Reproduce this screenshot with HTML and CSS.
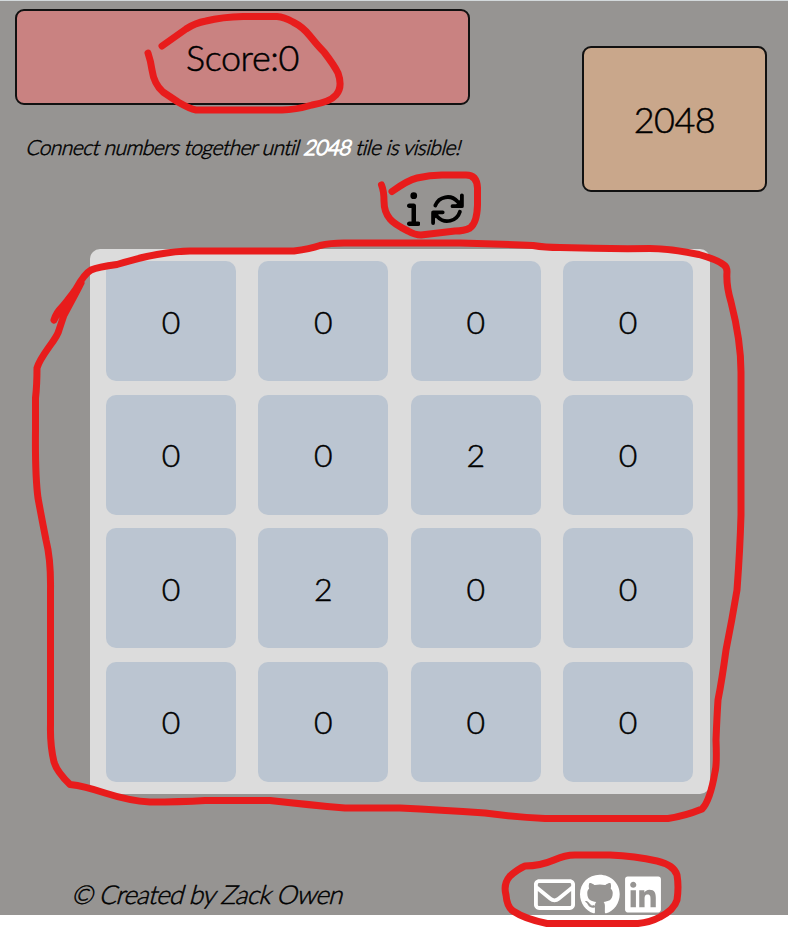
FILE: index.html
```html
<!DOCTYPE html>
<html lang="en">
<head>
<meta charset="utf-8">
<title>2048</title>
<link rel="stylesheet" href="styles.css">
</head>
<body>
<div class="app">
  <header class="header">
    <div class="intro">
      <div class="score">Score:0</div>
      <p class="hint">Connect numbers together until <strong>2048</strong> tile is visible!</p>
    </div>
    <div class="goal">2048</div>
  </header>
  <nav class="controls">
    <svg class="icon-info" viewBox="0 0 192 512"><path d="M48 80a48 48 0 1 1 96 0A48 48 0 1 1 48 80zM0 224c0-17.7 14.3-32 32-32H96c17.7 0 32 14.3 32 32V448h32c17.7 0 32 14.3 32 32s-14.3 32-32 32H32c-17.7 0-32-14.3-32-32s14.3-32 32-32H64V256H32c-17.7 0-32-14.3-32-32z"/></svg>
    <svg class="icon-restart" viewBox="0 0 36 36"><path d="M5.300 14.500A13.200 13.200 0 0 1 27.500 10.500L31.700 15M31.900 4.300V15.200H22.500M29.900 20.800A13.200 13.200 0 0 1 7.700 26L3.200 21.500M3.100 32V21.300H12.700"/><path class="head" d="M31.500 7V15.200H25L28 11ZM3.500 29V21.300H10L7 25.500Z"/></svg>
  </nav>
  <main class="board">
    <div class="tile">0</div><div class="tile">0</div><div class="tile">0</div><div class="tile">0</div>
    <div class="tile">0</div><div class="tile">0</div><div class="tile">2</div><div class="tile">0</div>
    <div class="tile">0</div><div class="tile">2</div><div class="tile">0</div><div class="tile">0</div>
    <div class="tile">0</div><div class="tile">0</div><div class="tile">0</div><div class="tile">0</div>
  </main>
  <footer class="footer">
    <span class="credit">© Created by Zack Owen</span>
    <div class="social">
      <svg class="icon-mail" viewBox="0 0 512 512"><path d="M64 112c-8.8 0-16 7.2-16 16v22.1L220.5 291.7c20.7 17 50.4 17 71.1 0L464 150.1V128c0-8.800-7.200-16-16-16H64zM48 212.200V384c0 8.800 7.200 16 16 16H448c8.800 0 16-7.200 16-16V212.200L322 328.800c-38.400 31.500-93.700 31.500-132 0L48 212.200zM0 128C0 92.700 28.700 64 64 64H448c35.300 0 64 28.700 64 64V384c0 35.300-28.700 64-64 64H64c-35.300 0-64-28.700-64-64V128z"/></svg>
      <svg class="icon-github" viewBox="0 0 496 512"><path d="M165.9 397.4c0 2-2.3 3.6-5.2 3.6-3.3.3-5.6-1.3-5.6-3.6 0-2 2.3-3.6 5.2-3.6 3-.3 5.6 1.3 5.6 3.6zm-31.1-4.5c-.7 2 1.3 4.3 4.3 4.9 2.6 1 5.6 0 6.2-2s-1.3-4.3-4.3-5.2c-2.6-.7-5.5.3-6.2 2.3zm44.2-1.7c-2.9.7-4.9 2.6-4.6 4.9.3 2 2.9 3.3 5.9 2.6 2.9-.7 4.9-2.6 4.6-4.6-.3-1.9-3-3.2-5.9-2.9zM244.8 8C106.1 8 0 113.3 0 252c0 110.9 69.8 205.8 169.5 239.2 12.8 2.3 17.3-5.6 17.3-12.1 0-6.2-.3-40.4-.3-61.4 0 0-70 15-84.7-29.8 0 0-11.4-29.1-27.8-36.6 0 0-22.9-15.7 1.6-15.4 0 0 24.9 2 38.6 25.8 21.9 38.6 58.6 27.5 72.9 20.9 2.3-16 8.8-27.1 16-33.7-55.9-6.2-112.3-14.3-112.3-110.5 0-27.5 7.6-41.3 23.6-58.9-2.6-6.5-11.1-33.3 2.6-67.9 20.9-6.5 69 27 69 27 20-5.6 41.5-8.5 62.8-8.5s42.8 2.9 62.8 8.5c0 0 48.1-33.6 69-27 13.7 34.7 5.2 61.4 2.6 67.9 16 17.7 25.8 31.5 25.8 58.9 0 96.5-58.9 104.2-114.8 110.5 9.2 7.9 17 22.9 17 46.4 0 33.7-.3 75.4-.3 83.6 0 6.5 4.6 14.4 17.3 12.1C428.2 457.8 496 362.9 496 252 496 113.3 383.5 8 244.8 8z"/></svg>
      <svg class="icon-linkedin" viewBox="0 0 448 512"><path d="M416 32H31.9C14.3 32 0 46.5 0 64.3v383.4C0 465.5 14.3 480 31.9 480H416c17.6 0 32-14.5 32-32.3V64.3c0-17.8-14.4-32.3-32-32.3zM135.4 416H69V202.2h66.5V416zm-33.2-243c-21.3 0-38.5-17.3-38.5-38.5S80.9 96 102.2 96c21.2 0 38.5 17.3 38.5 38.5 0 21.3-17.2 38.5-38.5 38.5zm282.1 243h-66.4V312c0-24.8-.5-56.7-34.5-56.7-34.6 0-39.9 27-39.9 54.9V416h-66.4V202.2h63.7v29.2h.9c8.9-16.8 30.6-34.5 62.2-34.5 66.5 0 79.9 43.8 79.9 100.9V416z"/></svg>
    </div>
  </footer>
</div>
<svg class="markup" viewBox="0 0 788 928">
  <path d="M162 46L186 29Q195 23 206 21Q222 17 243 16.500H277Q284 17 293 22Q303 27 310 36Q318 46 324 52Q334 65 338 73Q343 87 336 95Q330 102 312 105Q295 110 282 110H196Q190 109 178 102L163 92Q154 84 152 70Q151 62 148 53"/>
  <path d="M392 191.500Q408 180 417 178Q430 175 442 175H466Q477 175 477.500 188V205Q477 223 470 228Q464 231 455 231L421 235Q415 235 408 231Q394 224 390 219Q384 212 384 201Q384 191 381.500 185"/>
  <path d="M54 320Q56 313 62 307Q70 298 76 289Q84 274 91 270Q98 267 117 264.500Q142 257 157 254.500Q177 251 190 251H294Q310 249 320 245.500Q330 243 344 243H460Q500 244 533 245.500Q545 247.500 560 247.500Q605 249 650 248.500Q670 248.500 699 254.500Q718 260 724 265Q727 267 727 272Q726 285 731 302Q741 341 741 372V515Q740 550 737 590Q732 620 726 650Q722 680 718 700Q717 715 716 740Q717 765 715 772Q710 801 702 809Q685 816 668 818.500H545Q515 817 485 813Q440 810 400 808H345Q310 805 270 800.500H205Q180 802 150 802Q130 801 105 793Q84 786 70 784.500Q57 772 54 762Q50 745 50.500 725V590Q51 560 46 540Q42 520 38 498Q35 475 35.500 430V398Q37 385 37 368Q39 361 49 347Q58 335 59 330L64 315Q75 295 81 283L67 301Q58 312 54 320"/>
  <path d="M506 895Q503 884 510 876Q518 869 525 866Q540 866 554 860Q565 855 575 855H610Q635 856 657 861Q674 865 677 875Q679 887 677 900Q674 910 660 917Q650 922.500 638 923.500H547Q525 919 513 911Q507 907 506 895"/>
</svg>
</body>
</html>
```

FILE: styles.css
```css
* {
  box-sizing: border-box;
}

body {
  margin: 0;
  background: #fff;
  color: #000;
  font-family: Lato, sans-serif;
  font-weight: 300;
}

.app {
  height: 915px;
  display: flex;
  flex-direction: column;
  border-top: 1px solid #d3d9dc;
  background: #969492;
  -webkit-text-stroke: 0.5px currentColor;
}

.header {
  height: 191px;
  padding: 8px 21px 0 15px;
  display: flex;
  justify-content: space-between;
}

.intro {
  width: 455px;
}

.score {
  height: 96px;
  display: flex;
  align-items: center;
  justify-content: center;
  border: 2px solid #111;
  border-radius: 9px;
  background: #c98281;
  font-size: 36px;
  letter-spacing: -0.4px;
}

.hint {
  width: max-content;
  margin: 29px 0 0 9.500px;
  font-size: 21px;
  line-height: 26px;
  letter-spacing: -0.54px;
  white-space: nowrap;
  transform: skewX(-15deg);
  transform-origin: 0 80%;
}

.hint strong {
  color: #fff;
  font-weight: 300;
  -webkit-text-stroke: 1.300px #fff;
}

.goal {
  width: 185px;
  height: 146px;
  margin-top: 37px;
  display: flex;
  align-items: center;
  justify-content: center;
  border: 2px solid #111;
  border-radius: 9px;
  background: #c9a78b;
  font-size: 36px;
  letter-spacing: -0.5px;
}

.controls {
  height: 57px;
  padding-left: 406.500px;
  display: flex;
  gap: 10px;
}

svg {
  display: block;
  fill: currentColor;
}

.controls svg {
  height: 36px;
  margin-top: -2px;
}

.icon-info {
  width: 13.500px;
}

.controls .icon-restart {
  width: 36px;
  margin-top: -1px;
  fill: none;
  stroke: #000;
  stroke-width: 3.800;
  stroke-linecap: round;
  stroke-linejoin: round;
}

.icon-restart .head {
  fill: #000;
  stroke: none;
}

.board {
  width: 620px;
  height: 545px;
  margin-left: 90px;
  padding: 12px 17px 12px 16px;
  display: grid;
  grid-template-columns: repeat(4, 130px);
  grid-template-rows: repeat(4, 120px);
  justify-content: space-between;
  align-content: space-between;
  border-radius: 10px;
  background: #dcdcdc;
}

.tile {
  display: flex;
  align-items: center;
  justify-content: center;
  border-radius: 10px;
  background: #bbc5d1;
  font-size: 32px;
}

.footer {
  flex: 1;
  padding: 79.500px 127px 0 73px;
  display: flex;
  justify-content: space-between;
  align-items: flex-start;
}

.credit {
  font-size: 26px;
  line-height: 32px;
  margin: 4.500px 0 0 -2px;
  letter-spacing: -0.7px;
  transform: skewX(-15deg);
  transform-origin: 0 80%;
}

.social {
  display: flex;
  gap: 5px;
  color: #fff;
}

.social svg {
  height: 41px;
}

.icon-mail {
  width: 41px;
}

.icon-github {
  width: 39.700px;
}

.icon-linkedin {
  width: 36px;
}

.markup {
  position: absolute;
  top: 0;
  left: 0;
  width: 788px;
  height: 928px;
  fill: none;
  stroke: #e81c1c;
  stroke-width: 7;
  stroke-linecap: round;
  stroke-linejoin: round;
  pointer-events: none;
}
```
